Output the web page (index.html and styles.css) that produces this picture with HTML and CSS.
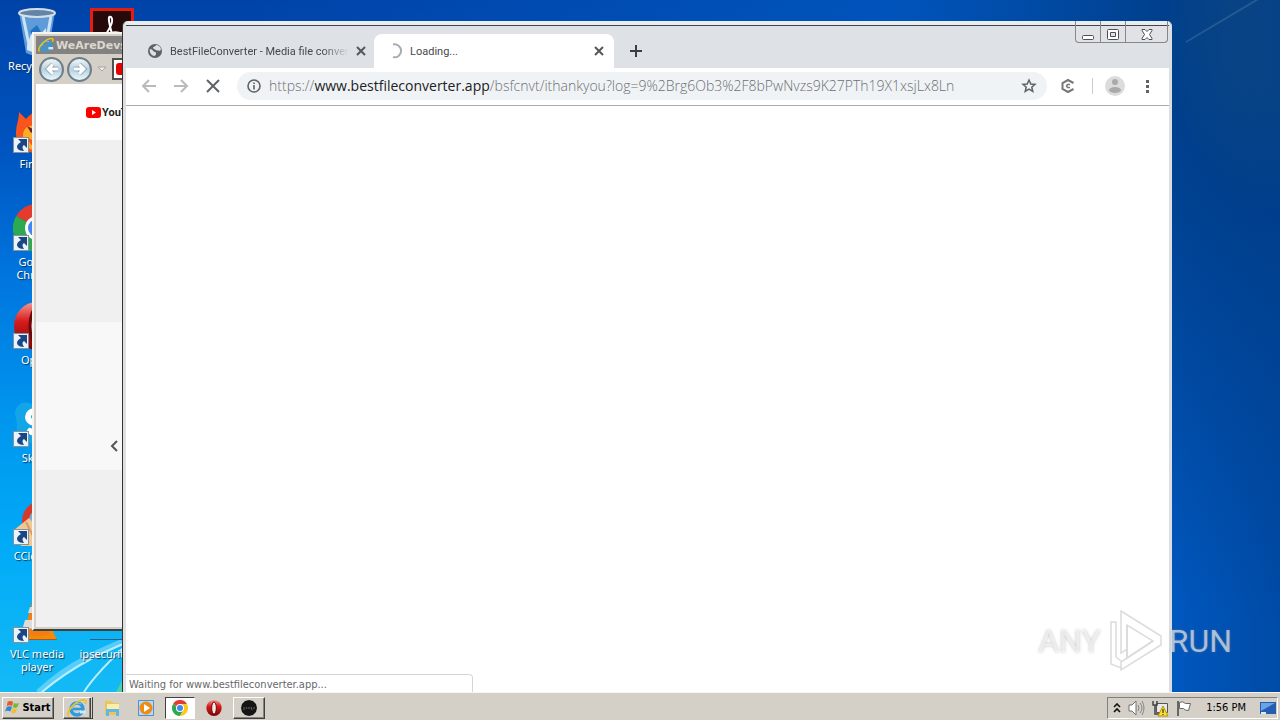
FILE: index.html
```
<!DOCTYPE html>
<html lang="en">
<head>
    <meta charset="UTF-8">
    <meta name="viewport" content="width=device-width, initial-scale=1.0">
    <title>Desktop</title>
    <link rel="stylesheet" href="styles.css">
</head>
<body>
    <!-- shared symbols -->
    <svg class="symbols" aria-hidden="true">
        <symbol id="shortcut" viewBox="0 0 16 16">
            <path d="M0 0h16v16H0z" fill="#8a9097"/>
            <path d="M1 1h14v14H1z" fill="#e9f3fc"/>
            <path d="M5 2h9v9l-3-3c-2 1-2 3 0 6C4 14 1 9 8 5z" fill="#1b4583"/>
        </symbol>
        <symbol id="ie" viewBox="0 0 20 20">
            <circle cx="10" cy="11" r="6" fill="none" stroke="#2d9be0" stroke-width="3.4"/>
            <path d="M5 11h11" stroke="#2d9be0" stroke-width="2.6"/>
            <path d="M13 12.5h6v3h-6z" fill="#d4e6ee"/>
            <path d="M5 11a6 6 0 0 1 9-5" fill="none" stroke="#8fd4f8" stroke-width="1"/>
            <path d="M2 18C-2 15 7 4 15 2c5-1 4 2 3 4" fill="none" stroke="#f0c020" stroke-width="1.8"/>
        </symbol>
        <symbol id="chrome" viewBox="0 0 48 48">
            <path d="M24 24 3.200 12A24 24 0 0 1 44.800 12z" fill="#e33b2e"/>
            <path d="M24 24 3.200 12A24 24 0 0 0 24 48l10-18z" fill="#2da94f"/>
            <path d="M24 24V12h20.800A24 24 0 0 1 24 48l10-18z" fill="#fdc91f"/>
            <circle cx="24" cy="24" r="12" fill="#fff"/>
            <circle cx="24" cy="24" r="9" fill="#4285f4"/>
        </symbol>
        <symbol id="opera" viewBox="0 0 48 48">
            <linearGradient id="red" x2="0" y2="1"><stop stop-color="#f69a94"/><stop offset=".4" stop-color="#d71c1c"/><stop offset="1" stop-color="#7a0505"/></linearGradient>
            <ellipse cx="24" cy="24" rx="23" ry="24" fill="url(#red)"/>
            <ellipse cx="24" cy="24" rx="7" ry="18" fill="#f4eaea" stroke="#6d0606" stroke-width="3"/>
        </symbol>
    </svg>

    <main class="desktop">
        <svg class="streaks" viewBox="0 0 300 160" aria-hidden="true">
            <path d="M38 160C70 130 100 118 150 98" fill="none" stroke="#9fe4fd" stroke-width="5" opacity=".5"/>
            <path d="M42 160C74 133 102 120 150 101M84 160C94 144 112 126 135 105" fill="none" stroke="#e2faff" stroke-width="2" opacity=".8"/>
            <path d="M116 160l14-26v26z" fill="#65d98c" opacity=".7"/>
        </svg>
        <svg class="ray" viewBox="0 0 110 140" aria-hidden="true">
            <path d="M16 42 90-2" stroke="#527ba8" stroke-width="2" opacity=".4"/>
        </svg>

        <ul class="icons">
            <li class="icon">
                <svg viewBox="0 0 48 48">
                    <path d="M6 4 13 45q10 5 22 0L42 4z" fill="#6faadf" opacity=".85"/>
                    <path d="M10 8l7 34M38 8l-6 34" stroke="#c9e4f6" stroke-width="3"/>
                    <path d="M14 38l5-15 6 6 8-9 1 22q-9 5-20 0z" fill="#dce8f0"/>
                    <path d="m17 23 7-6 5 9-8 5z" fill="#2370c7"/>
                    <ellipse cx="24" cy="5" rx="18" ry="4" fill="#6484a7" stroke="#d4dfe8" stroke-width="2"/>
                </svg>
                <span>Recycle Bin</span>
            </li>
            <li class="icon">
                <svg viewBox="0 0 48 48">
                    <path d="M3 28C3 18 6 15 6 6l7 7c2-3 5-4 7-7l5 7c12-2 20 7 20 17S36 47 24 47 3 40 3 28z" fill="#fb541f"/>
                    <path d="M10 30c0-8 6-12 13-10l-4 5 8 5c-4 5-9 5-12 1 0 6 5 11 13 11-9 6-18-2-18-12z" fill="#ffae24"/>
                    <path d="m14 20 8 4-4 3z" fill="#67203c"/>
                </svg>
                <svg class="shortcut"><use href="#shortcut"/></svg>
                <span>Firefox</span>
            </li>
            <li class="icon">
                <svg><use href="#chrome"/></svg>
                <svg class="shortcut"><use href="#shortcut"/></svg>
                <span>Google<br>Chrome</span>
            </li>
            <li class="icon">
                <svg><use href="#opera"/></svg>
                <svg class="shortcut"><use href="#shortcut"/></svg>
                <span>Opera</span>
            </li>
            <li class="icon">
                <svg viewBox="0 0 48 48">
                    <path d="M2 14C2 5 11 0 18 4c16-2 27 9 25 23 4 9-3 18-14 16C11 46 2 36 4 24z" fill="#12a5e8"/>
                    <path d="M33 16c-6-8-18-6-18 1 0 9 18 5 18 12 0 5-11 6-16 2" fill="none" stroke="#fff" stroke-width="6" stroke-linecap="round"/>
                </svg>
                <svg class="shortcut"><use href="#shortcut"/></svg>
                <span>Skype</span>
            </li>
            <li class="icon">
                <svg viewBox="0 0 48 48">
                    <circle cx="29" cy="23" r="20" fill="#d8392c"/>
                    <circle cx="29" cy="23" r="13" fill="#76aed6"/>
                    <path d="M1 32 16 20l8 9v19H8z" fill="#f0c796"/>
                    <path d="m13 24 8 16" stroke="#d99b60" stroke-width="2"/>
                </svg>
                <svg class="shortcut"><use href="#shortcut"/></svg>
                <span>CCleaner</span>
            </li>
            <li class="icon">
                <svg viewBox="0 0 48 48">
                    <path d="M7 33h32l5 11H3z" fill="#f28a0c"/>
                    <path d="M3 43h41v1H3z" fill="#b85408"/>
                    <path d="M20 2h6l11 36q-13 4-26 0z" fill="#f47d12"/>
                    <path d="m17 11h12l2 6H15zM12 24h20l2 7q-11 4-24 0z" fill="#dcdcda"/>
                </svg>
                <svg class="shortcut"><use href="#shortcut"/></svg>
                <span>VLC media<br>player</span>
            </li>
            <li class="icon">
                <svg viewBox="0 0 48 48">
                    <path d="M2 0h44v48H2z" fill="#e61b12"/>
                    <path d="M5 3h38v45H5z" fill="#25090b"/>
                    <path d="M24 26C19 8 21 8 23 9c4 4-3 14-8 22 6-8 13-8 20-5" fill="none" stroke="#fff" stroke-width="2"/>
                </svg>
                <span>Acrobat</span>
            </li>
            <li class="icon last">
                <svg viewBox="0 0 48 48">
                    <path d="M2 43h44v1H2z" fill="#25617f"/>
                </svg>
                <span>ipsecurity.rtf</span>
            </li>
        </ul>

        <!-- background window -->
        <section class="ie">
            <header class="ie-title">
                <svg><use href="#ie"/></svg>
                <span>WeAreDevs</span>
            </header>
            <nav class="ie-nav">
                <button class="round" aria-label="Back">
                    <svg viewBox="0 0 26 26"><path d="M21 13H8m6-6-6 6 6 6" fill="none" stroke="#829cae" stroke-width="6"/><path d="M21 13H8m6-6-6 6 6 6" fill="none" stroke="#fff" stroke-width="4"/></svg>
                </button>
                <button class="round" aria-label="Forward">
                    <svg viewBox="0 0 26 26"><path d="M5 13h13m-6-6 6 6-6 6" fill="none" stroke="#829cae" stroke-width="6"/><path d="M5 13h13m-6-6 6 6-6 6" fill="none" stroke="#fff" stroke-width="4"/></svg>
                </button>
                <button class="drop" aria-label="Recent pages">
                    <svg viewBox="0 0 10 6"><path d="M1 1h8L5 5z" fill="#eee" stroke="#aaa59d"/></svg>
                </button>
                <div class="ie-address">
                    <svg viewBox="0 0 16 12"><rect width="16" height="12" rx="3" fill="#e60000"/><path d="m6 3 5 3-5 3z" fill="#fff"/></svg>
                </div>
            </nav>
            <div class="ie-page">
                <div class="yt-bar">
                    <svg viewBox="0 0 15 11"><rect width="15" height="11" rx="3" fill="#f00"/><path d="m6 3 4 2.500-4 2.500z" fill="#fff"/></svg>
                    <span>YouTube</span>
                </div>
                <div class="yt-gap"></div>
                <div class="yt-panel">
                    <button class="prev" aria-label="Previous">
                        <svg viewBox="0 0 8 12"><path d="M7 1 2 6l5 5" fill="none" stroke="#555" stroke-width="2"/></svg>
                    </button>
                </div>
                <div class="yt-rest"></div>
            </div>
        </section>

        <!-- browser window -->
        <section class="browser">
            <div class="controls">
                <button aria-label="Minimize">
                    <svg viewBox="0 0 14 14"><rect x="1.500" y="8.500" width="11" height="4" rx="1" fill="#fff" stroke="#4c4d55"/></svg>
                </button>
                <button aria-label="Maximize">
                    <svg viewBox="0 0 14 14"><rect x="1.500" y="2.500" width="11" height="10" rx="1" fill="#fff" stroke="#4c4d55"/><path d="M4.500 5.500h5v4h-5z" fill="#dee1e6" stroke="#4c4d55"/></svg>
                </button>
                <button class="close" aria-label="Close">
                    <svg viewBox="0 0 14 14"><path d="M2 2.500h3l2 2 2-2h3v1L9.500 7.500l2.500 4v1H9l-2-2-2 2H2v-1l2.500-4L2 3.500z" fill="#fff" stroke="#4c4d55"/></svg>
                </button>
            </div>
            <div class="tabs">
                <div class="tab">
                    <svg viewBox="0 0 16 16"><circle cx="8" cy="8" r="7" fill="#5f6368"/><path d="M3 6c3 0 3 3 5 3s1 4-1 4C4 12 2 9 3 6zM9 2c0 2-3 1-3 3 0 1 2 1 3 2s2 0 4 1l1-2c-1-3-3-4-5-4z" fill="#dee1e6"/></svg>
                    <span class="fade">BestFileConverter - Media file conver</span>
                    <button aria-label="Close tab"><svg viewBox="0 0 10 10"><path d="m1 1 8 8m0-8L1 9" stroke="#54575b" stroke-width="2"/></svg></button>
                </div>
                <div class="tab active">
                    <svg viewBox="0 0 16 16"><path d="M6 1.500a6.500 6.500 0 1 1 0 12.600" fill="none" stroke="#a9abae" stroke-width="2"/></svg>
                    <span>Loading...</span>
                    <button aria-label="Close tab"><svg viewBox="0 0 10 10"><path d="m1 1 8 8m0-8L1 9" stroke="#54575b" stroke-width="2"/></svg></button>
                </div>
                <button class="new-tab" aria-label="New tab">
                    <svg viewBox="0 0 12 12"><path d="M6 0v12M0 6h12" stroke="#3c4043" stroke-width="2"/></svg>
                </button>
            </div>
            <div class="toolbar">
                <button aria-label="Back"><svg viewBox="0 0 16 16"><path d="M15 8H2m6-6L2 8l6 6" fill="none" stroke="#b8babc" stroke-width="2"/></svg></button>
                <button aria-label="Forward"><svg viewBox="0 0 16 16"><path d="M1 8h13M8 2l6 6-6 6" fill="none" stroke="#b8babc" stroke-width="2"/></svg></button>
                <button aria-label="Stop"><svg viewBox="0 0 16 16"><path d="m2 2 12 12m0-12L2 14" stroke="#5f6368" stroke-width="2"/></svg></button>
                <div class="omnibox">
                    <svg viewBox="0 0 16 16"><circle cx="8" cy="8" r="6" fill="none" stroke="#5f6368" stroke-width="1.600"/><path d="M8 7v4.500M8 4.500V6" stroke="#5f6368" stroke-width="1.600"/></svg>
                    <div class="url" role="textbox" aria-label="Address" contenteditable="true" spellcheck="false">https://<b>www.bestfileconverter.app</b>/bsfcnvt/ithankyou?log=9%2Brg6Ob3%2F8bPwNvzs9K27PTh19X1xsjLx8Ln</div>
                    <button aria-label="Bookmark"><svg viewBox="0 0 16 16"><path d="m8 2 1.800 4 4.200.400-3.200 2.800 1 4.300L8 11.200l-3.800 2.300 1-4.300L2 6.400 6.200 6z" fill="none" stroke="#5f6368" stroke-width="1.500"/></svg></button>
                </div>
                <button class="extension" aria-label="Extension"><svg viewBox="0 0 16 16"><path d="m13.500 5-5.500-3-5.500 3v6L8 14l5.500-3" fill="none" stroke="#777" stroke-width="2"/><path d="M10 6.500H7.500L6.500 8l1 1.500H10" fill="none" stroke="#777" stroke-width="1.500"/></svg></button>
                <span class="divider"></span>
                <button class="avatar" aria-label="Profile"><svg viewBox="0 0 20 20"><circle cx="10" cy="10" r="10" fill="#dcdcdd"/><circle cx="10" cy="6" r="3" fill="#aaa"/><ellipse cx="10" cy="14" rx="6" ry="3" fill="#aaa"/></svg></button>
                <button class="menu" aria-label="Menu"><svg viewBox="0 0 16 16"><path d="M7 2h3v3H7zm0 5h3v3H7zm0 5h3v3H7z" fill="#5f6368"/></svg></button>
            </div>
            <div class="page"></div>
            <div class="status">Waiting for www.bestfileconverter.app...</div>
        </section>

        <div class="watermark">
            <span>ANY</span>
            <svg viewBox="0 0 60 66">
                <path d="M6 56V14h5v35l5 4v7zM16 3l40 25v9L16 62v-8l32-21L22 17v24l-6 4z" fill="#fff" fill-opacity=".7" stroke="#dcdcdc" stroke-width="1.500"/>
                <path d="M22 17v33l26-17" fill="none" stroke="#dcdcdc" stroke-width="2"/>
            </svg>
            <span>RUN</span>
        </div>
    </main>

    <footer class="taskbar">
        <button class="start">
            <svg viewBox="0 0 18 16">
                <path d="M3 2q3-2 6 0L8 7Q5 5 2 7z" fill="#e8582a"/>
                <path d="M10 3q3 2 6 0l-2 5q-3 2-5 0z" fill="#79b837"/>
                <path d="M2 8q3-2 6 0l-2 5q-3-2-6 0z" fill="#3189d6"/>
                <path d="M9 9q3 2 5 0l-2 5q-3 2-5 0z" fill="#f5bd2b"/>
            </svg>
            Start
        </button>
        <button class="task raised stack" aria-label="Internet Explorer"><svg><use href="#ie"/></svg></button>
        <button class="task" aria-label="Explorer">
            <svg viewBox="0 0 20 20"><path d="M3 3h6l2 2h6v12H3z" fill="#e9c65b"/><path d="M5 6h12v7H5z" fill="#faeea9"/><path d="M4 11h13v7h-3v-4H7v4H4z" fill="#65b7e3"/></svg>
        </button>
        <button class="task" aria-label="Media Player">
            <svg viewBox="0 0 20 20"><path d="M2.500 2.500h15v15h-15z" fill="#b9d8f1" stroke="#4b92cf"/><circle cx="10" cy="10" r="6.500" fill="#f18a13"/><path d="m8 6 6 4-6 4z" fill="#fff"/></svg>
        </button>
        <button class="task pressed" aria-label="Chrome"><svg class="small"><use href="#chrome"/></svg></button>
        <button class="task" aria-label="Opera"><svg class="small"><use href="#opera"/></svg></button>
        <button class="task raised app" aria-label="Application">
            <svg viewBox="0 0 20 20"><path d="m10 2 4 1 3 3 1 4-1 4-3 3-4 1-4-1-3-3-1-4 1-4 3-3z" fill="#151515"/><path d="M5 9v3m2-3 1 2m2-2v2m2-2 1 3m2-3v2" stroke="#666"/></svg>
        </button>
        <div class="tray">
            <button aria-label="Show hidden icons"><svg class="chevrons" viewBox="0 0 8 10"><path d="m1 4 3-3 3 3M1 9l3-3 3 3" fill="none" stroke="#111" stroke-width="1.600"/></svg></button>
            <svg viewBox="0 0 18 18"><path d="M2 6h3l4-4v14l-4-4H2z" fill="#fff" stroke="#707070"/><path d="M11 6q2 3 0 6m2-8q4 5 0 10m2-12q4 7 0 14" fill="none" stroke="#858585"/></svg>
            <svg viewBox="0 0 18 18"><path d="M5.500 4.500h11v9h-11z" fill="#e9e9e9" stroke="#555"/><path d="M2 2v4h4V2M4 6v9h5" fill="none" stroke="#444" stroke-width="1.500"/><path d="m12 7 5 10H7z" fill="#ffe23a" stroke="#b79200"/><path d="M12 10v4m0 1v1" stroke="#111"/></svg>
            <svg viewBox="0 0 18 18"><path d="M3 2v15" stroke="#666" stroke-width="2"/><path d="M4.500 3.500q3-2 6 1h5l-2 7q-4 0-5-2h-4z" fill="#fff" stroke="#666"/></svg>
            <time>1:56 PM</time>
            <button aria-label="Show desktop"><svg viewBox="0 0 18 18"><path d="M1 3h16v12H1z" fill="#265dae"/><path d="M2 4h14L2 12z" fill="#68a4e6"/><path d="M2 13h5v2H2z" fill="#dbe9f8"/></svg></button>
        </div>
    </footer>
</body>
</html>
```

FILE: styles.css
```
* {
    box-sizing: border-box;
}

body {
    margin: 0;
    height: 100vh;
    overflow: hidden;
    display: flex;
    flex-direction: column;
    font-family: "DejaVu Sans Condensed", "Noto Sans", sans-serif;
    font-size: 11px;
    line-height: 13px;
}

button {
    border: 0;
    padding: 0;
    background: none;
    font: inherit;
    color: inherit;
    display: flex;
    align-items: center;
    justify-content: center;
}

svg {
    display: block;
    flex: none;
}

.symbols {
    position: absolute;
    width: 0;
    height: 0;
}

/* Desktop */
.desktop {
    flex: 1;
    position: relative;
    overflow: hidden;
    background:
        linear-gradient(to right, transparent 91%, rgba(0, 62, 140, 0.5)),
        radial-gradient(ellipse 30% 85% at 100% 5%, #0c4680 10%, #003f8c 30%, transparent),
        linear-gradient(to right, transparent 20%, #0058c0 85%),
        linear-gradient(#0043a8, #0052bd 20%, #0072dc 38%, #0095ee 60%, #00aaf7 78%, #14baf5);
}

.streaks {
    position: absolute;
    left: 0;
    bottom: 0;
    width: 300px;
}

.ray {
    position: absolute;
    right: 0;
    top: 0;
    width: 110px;
}

.icons {
    list-style: none;
    margin: 0;
    padding: 8px 0 0;
    width: 150px;
    display: grid;
    grid-template-columns: 74px 76px;
    grid-template-rows: repeat(7, 98px);
    grid-auto-flow: column;
}

.icon {
    position: relative;
    display: flex;
    flex-direction: column;
    align-items: center;
    gap: 3px;
    color: #fff;
    text-align: center;
    white-space: nowrap;
    font-family: "Noto Sans", sans-serif;
    text-shadow: 1px 1px 1px #035;
}

.icon.last {
    grid-row: 7;
    grid-column: 2;
}

.icon svg {
    width: 48px;
    height: 48px;
}

.icon .shortcut {
    position: absolute;
    left: 13px;
    top: 31px;
    width: 16px;
    height: 16px;
}

/* Internet Explorer */
.ie {
    position: absolute;
    left: 32px;
    top: 32px;
    bottom: 61px;
    width: 50%;
    display: flex;
    flex-direction: column;
    padding: 2px;
    background: #d4d0c8;
    border: 2px solid #404040;
    border-left-color: #f6f4ef;
    border-top-color: #f6f4ef;
}

.ie-title {
    display: flex;
    align-items: center;
    gap: 2px;
    height: 18px;
    padding-left: 2px;
    background: #848280;
    color: #dcd8d0;
    font-family: "DejaVu Sans", sans-serif;
    font-weight: bold;
}

.ie-title svg {
    width: 16px;
    height: 16px;
}

.ie-nav {
    display: flex;
    align-items: center;
    gap: 3px;
    height: 30px;
    padding-left: 3px;
}

.round {
    width: 25px;
    height: 25px;
    border: 2px solid #6f7e88;
    border-radius: 50%;
    background: linear-gradient(#f2f6f8, #b8d0e0 50%, #e8f9fd);
}

.round svg {
    width: 20px;
}

.drop {
    width: 14px;
}

.drop svg {
    width: 10px;
}

.ie-address {
    flex: 1;
    height: 22px;
    display: flex;
    align-items: center;
    padding-left: 2px;
    background: #fff;
    border: 2px solid #505050;
}

.ie-address svg {
    width: 16px;
}

.ie-page {
    flex: 1;
    background: #f0f0f0;
    display: flex;
    flex-direction: column;
}

.yt-bar {
    display: flex;
    align-items: center;
    gap: 1px;
    height: 56px;
    padding-left: 50px;
    background: #fff;
    color: #222;
    font-family: Roboto, sans-serif;
    font-size: 11px;
    font-weight: bold;
}

.yt-bar svg {
    width: 15px;
}

.yt-gap {
    flex: 183 0 0;
}

.yt-panel {
    flex: 130 0 0;
    background: #f8f8f8;
    display: flex;
    align-items: flex-end;
    padding: 0 74px 18px;
}

.yt-rest {
    flex: 158 0 0;
}

.prev svg {
    width: 8px;
}

/* Browser */
.browser {
    position: absolute;
    left: 123px;
    right: 108px;
    top: 21px;
    bottom: 0;
    display: flex;
    flex-direction: column;
    background: #fff;
    border: 3px solid #dcdfe1;
    border-left-color: #e0e0e0;
    border-top: 4px solid #e7edf1;
    border-bottom: 0;
    border-radius: 5px 5px 0 0;
    box-shadow: -1px 0 #333;
}

.controls {
    position: absolute;
    right: 1px;
    top: -4px;
    height: 22px;
    display: flex;
    border: 1px solid #85878d;
    border-top: 0;
    border-radius: 0 0 4px 4px;
    background: linear-gradient(#e7edf1 4px, #444 4px, #444 5px, #e0e2e6 5px);
}

.controls button {
    width: 25px;
    border-right: 1px solid #85878d;
    padding-top: 4px;
}

.controls .close {
    width: 41px;
    border: 0;
}

.controls svg {
    width: 14px;
}

.tabs {
    height: 43px;
    display: flex;
    align-items: flex-end;
    padding-left: 8px;
    background: #dee1e6;
    border-top: 1px solid #444;
    color: #45494d;
    font-family: Roboto, "Noto Sans", sans-serif;
}

.tab {
    display: flex;
    align-items: center;
    gap: 7px;
    width: 240px;
    height: 34px;
    padding: 0 9px 0 13px;
}

.tab > svg {
    width: 16px;
}

.tab span {
    flex: 1;
    white-space: nowrap;
}

.tab .fade {
    mask-image: linear-gradient(to right, #000 85%, transparent);
}

.tab button {
    width: 12px;
    height: 16px;
}

.tab button svg {
    width: 10px;
}

.tab.active {
    background: #fff;
    border-radius: 8px 8px 0 0;
}

.new-tab {
    width: 28px;
    height: 34px;
    margin-left: 8px;
}

.new-tab svg {
    width: 12px;
}

.toolbar {
    display: flex;
    align-items: center;
    gap: 16px;
    height: 38px;
    padding: 0 14px 2px 15px;
    border-bottom: 1px solid #aaa;
}

.toolbar svg {
    width: 16px;
}

.omnibox {
    flex: 1;
    min-width: 0;
    height: 28px;
    display: flex;
    align-items: center;
    gap: 7px;
    padding: 0 10px 0 9px;
    border-radius: 14px;
    background: #f0f3f5;
}

.url {
    flex: 1;
    min-width: 0;
    overflow: hidden;
    white-space: nowrap;
    font-family: "Open Sans", "Noto Sans", sans-serif;
    font-size: 14px;
    font-weight: 300;
    line-height: 20px;
    color: #6c7074;
}

.url b {
    font-weight: 400;
    color: #202124;
}

.extension {
    margin-left: -3px;
}

.divider {
    width: 1px;
    height: 16px;
    background: #c8cacd;
}

.toolbar .avatar {
    margin-left: -4px;
}

.toolbar .avatar svg {
    width: 20px;
}

.toolbar .menu {
    margin-left: -2px;
}

.page {
    flex: 1;
}

.status {
    width: 347px;
    height: 18px;
    padding: 3px;
    border: 1px solid #d5d5d5;
    border-width: 1px 1px 0 0;
    border-radius: 0 4px 0 0;
    color: #66686a;
}

.watermark {
    position: absolute;
    right: 48px;
    bottom: 18px;
    display: flex;
    align-items: center;
    gap: 4px;
    color: rgba(255, 255, 255, 0.6);
    font-family: Roboto, sans-serif;
    font-size: 32px;
    line-height: 66px;
    text-shadow: 0 0 3px rgba(130, 130, 130, 0.5);
}

.watermark svg {
    width: 60px;
}

/* Taskbar */
.taskbar {
    height: 28px;
    display: flex;
    align-items: center;
    gap: 4px;
    padding: 2px 2px 0;
    background: #d4d0c8;
    border-top: 1px solid #f7f5f0;
}

.start,
.raised {
    border: 1px solid #404040;
    border-left-color: #fff;
    border-top-color: #fff;
    box-shadow: inset -1px -1px #86837d;
}

.start {
    width: 52px;
    height: 22px;
    margin-right: 5px;
    gap: 1px;
    font-family: "DejaVu Sans Condensed", sans-serif;
    font-weight: bold;
    color: #000;
}

.start svg {
    width: 16px;
}

.task {
    width: 30px;
    height: 22px;
}

.task svg {
    width: 20px;
    height: 20px;
}

.task .small {
    width: 16px;
    height: 16px;
}

.stack {
    border-right: 3px double #404040;
}

.pressed {
    background: #fff;
    border: 1px solid #fff;
    border-left-color: #404040;
    border-top-color: #404040;
}

.app {
    width: 32px;
}

.tray {
    display: flex;
    align-items: center;
    gap: 6px;
    height: 22px;
    margin-left: auto;
    padding: 0 0 0 5px;
    border: 1px solid #fff;
    border-left-color: #808080;
    border-top-color: #808080;
}

.tray svg {
    width: 18px;
}

.tray .chevrons {
    width: 8px;
}

.tray time {
    padding: 0 7px;
    color: #000;
}
```
